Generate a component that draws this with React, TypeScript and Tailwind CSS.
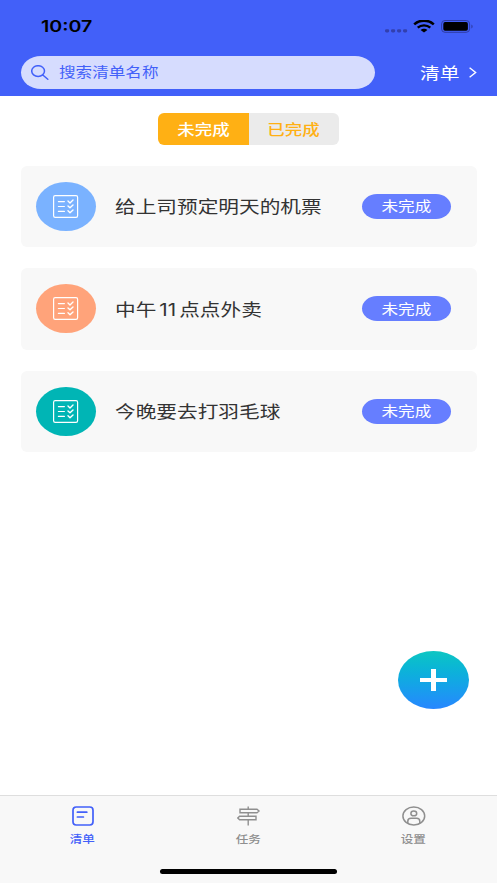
import { ReactNode, useState } from "react";
import clsx from "clsx";

type Todo = {
  id: number;
  title: string;
  color: string;
};

const todos: Todo[] = [
  { id: 1, title: "给上司预定明天的机票", color: "bg-[#7ab2ff]" },
  { id: 2, title: "中午 11 点点外卖", color: "bg-[#ffa37a]" },
  { id: 3, title: "今晚要去打羽毛球", color: "bg-[#00b5b5]" },
];

// Wide lettering, grows to the right of its start
function Wide({ children, className }: { children: ReactNode; className?: string }) {
  return (
    <span className={clsx("inline-block whitespace-pre scale-x-[1.22]", className || "origin-left")}>
      {children}
    </span>
  );
}

function StatusBar() {
  return (
    <div className="flex h-[52px] items-center justify-between pl-[41px] pr-[23px] text-black">
      <Wide className="origin-left font-['Inter'] text-[16.1px] font-semibold leading-none">10:07</Wide>
      <div className="flex items-center">
        <svg className="mt-[9px] h-[4px] w-[23px]" viewBox="0 0 23 4" fill="#323fae">
          <rect x="0" y="0.2" width="4.2" height="3.2" rx="1.4" />
          <rect x="6" y="0.2" width="4.2" height="3.2" rx="1.4" />
          <rect x="12" y="0.2" width="4.2" height="3.2" rx="1.4" />
          <rect x="18" y="0.2" width="4.2" height="3.2" rx="1.4" />
        </svg>
        <svg className="ml-[5px] h-[13px] w-[22px]" viewBox="0 0 22 13" fill="none" stroke="#000">
          <path d="M1.2 4.4C6.6-.6 15.4-.6 20.8 4.4" strokeWidth="2.5" />
          <path d="M4.7 7.7C8.2 4.6 13.8 4.6 17.3 7.7" strokeWidth="2.4" />
          <path d="M7.6 10.1C9.4 8.4 12.6 8.4 14.4 10.1L11 12.6Z" fill="#000" stroke="none" />
        </svg>
        <svg className="ml-[6px] h-[13px] w-[33px]" viewBox="0 0 33 13">
          <rect x="0.6" y="0.5" width="28" height="11.8" rx="3.4" fill="none" stroke="#2f3ca5" />
          <rect x="2.3" y="2.1" width="24.6" height="8.6" rx="1.8" fill="#000" />
          <path d="M30.4 4.4C32 4.9 32 7.9 30.4 8.4Z" fill="#2f3ca5" />
        </svg>
      </div>
    </div>
  );
}

function ChecklistIcon() {
  return (
    <svg
      className="h-[23px] w-[26px]"
      viewBox="0 0 26 23"
      fill="none"
      stroke="#fff"
      strokeWidth="1.2"
      strokeLinecap="round"
      strokeLinejoin="round"
    >
      <rect x="0.6" y="0.7" width="24" height="21.6" rx="1.6" />
      <path d="M5.4 6.6h6M5.4 11.5h6M5.4 16.4h6" />
      <path d="M15 6l2 1.9 3-2.8M15 10.9l2 1.9 3-2.8M15 15.8l2 1.9 3-2.8" strokeWidth="1.4" />
    </svg>
  );
}

function TodoCard({ todo }: { todo: Todo }) {
  return (
    <div className="flex h-[81.5px] items-center rounded-[6px] bg-[#f8f8f8] pl-[15.5px] pr-[25.5px]">
      <div className={clsx("flex h-[49px] w-[60px] shrink-0 items-center justify-center rounded-[50%]", todo.color)}>
        <ChecklistIcon />
      </div>
      <div className="ml-[19px] flex-1 pt-[3px] font-['Inter','Noto_Sans_CJK_SC',sans-serif] text-[16.95px] text-[#333] [word-spacing:-2.3px]">
        <Wide>{todo.title}</Wide>
      </div>
      <div className="flex h-[25px] w-[89px] items-center justify-center rounded-[15px/12.5px] bg-[#667eff] pb-[2px] text-[13.6px] text-white">
        <Wide className="origin-center">未完成</Wide>
      </div>
    </div>
  );
}

function ListIcon() {
  return (
    <svg className="h-[20px] w-[22px]" viewBox="0 0 22 20" fill="none" stroke="currentColor" strokeWidth="1.7" strokeLinecap="round">
      <rect x="1" y="1" width="20" height="18" rx="3.2" />
      <path d="M5.4 6.2h9.4M5.4 11h6" />
    </svg>
  );
}

function SignpostIcon() {
  return (
    <svg className="h-[20px] w-[24px]" viewBox="0 0 24 20" fill="none" stroke="currentColor" strokeWidth="1.4">
      <path d="M3 3.2h17l2 1.8-2 1.8H3zM19 10.2H2.6L.8 12l1.8 1.8H19z" />
      <path d="M11.2 0.6v2.6M11.2 6.8v3.4M11.2 13.8v5.6" />
    </svg>
  );
}

function ProfileIcon() {
  return (
    <svg className="h-[20px] w-[24px]" viewBox="0 0 24 20" fill="none" stroke="currentColor" strokeWidth="1.5">
      <ellipse cx="11.8" cy="10" rx="10.9" ry="9.1" />
      <ellipse cx="11.8" cy="7.4" rx="2.9" ry="2.4" />
      <path d="M5.8 17.4v-2.2c0-2 1.4-3 3.2-3h5.6c1.8 0 3.2 1 3.2 3v2.2" />
    </svg>
  );
}

const navItems = [
  { label: "清单", icon: <ListIcon /> },
  { label: "任务", icon: <SignpostIcon /> },
  { label: "设置", icon: <ProfileIcon /> },
];

export default function App() {
  const [done, setDone] = useState(false);
  const [active, setActive] = useState(0);

  return (
    <div className="relative flex h-[883px] w-[497px] flex-col overflow-hidden bg-white font-['Noto_Sans_CJK_SC',sans-serif]">
      <header className="h-[95.5px] shrink-0 bg-[#4260f9]">
        <StatusBar />
        <div className="mt-[4px] flex items-center pl-[21px] pr-[20px]">
          <div className="flex h-[33px] w-[353.5px] items-center rounded-[20px/16.5px] bg-[#d6dcfe] pl-[10px] text-[#4260f9]">
            <svg className="h-[15px] w-[18px]" viewBox="0 0 18 15" fill="none" stroke="currentColor" strokeWidth="1.5" strokeLinecap="round">
              <ellipse cx="7.1" cy="6.1" rx="6.4" ry="5.4" />
              <path d="M11.8 10l5 4.2" />
            </svg>
            <div className="ml-[10px] pb-[2px] text-[13.6px]">
              <Wide>搜索清单名称</Wide>
            </div>
          </div>
          <div className="ml-[45.5px] w-[42px] pb-[1px] text-[16.2px] text-white">
            <Wide>清单</Wide>
          </div>
          <svg className="ml-auto h-[11px] w-[8px]" viewBox="0 0 8 11" fill="none" stroke="#fff" strokeWidth="1.4">
            <path d="M0.6 0.8L6.6 5.5L0.6 10.2" />
          </svg>
        </div>
      </header>

      <main className="flex-1 px-[20.5px] pt-[17.5px]">
        <div className="mx-auto flex h-[31.5px] w-[181px] overflow-hidden rounded-[6px] text-[14.3px] font-medium">
          <button
            type="button"
            className={clsx("flex flex-1 items-center justify-center pb-[1px]", done ? "bg-[#ebebeb] text-[#ffb014]" : "bg-[#ffb014] text-white")}
            onClick={() => setDone(false)}
          >
            <Wide className="origin-center">未完成</Wide>
          </button>
          <button
            type="button"
            className={clsx("flex flex-1 items-center justify-center pb-[1px]", done ? "bg-[#ffb014] text-white" : "bg-[#ebebeb] text-[#ffb014]")}
            onClick={() => setDone(true)}
          >
            <Wide className="origin-center">已完成</Wide>
          </button>
        </div>

        <div className="mt-[21px] flex flex-col gap-[21px]">
          {todos.map((todo) => (
            <TodoCard key={todo.id} todo={todo} />
          ))}
        </div>
      </main>

      <button
        type="button"
        className="absolute bottom-[174px] right-[28px] flex h-[58.5px] w-[71.5px] items-center justify-center rounded-[50%] bg-linear-to-b from-[#0fc6c2] to-[#2786ff]"
      >
        <svg className="h-[22px] w-[27px]" viewBox="0 0 27 22" fill="#fff">
          <path d="M11 0h5v9h11v4H16v9h-5v-9H0V9h11z" />
        </svg>
      </button>

      <nav className="flex h-[88px] shrink-0 flex-col border-t border-[#dedede] bg-[#f8f8f8]">
        <div className="flex pt-[9.5px]">
          {navItems.map((item, index) => (
            <button
              key={item.label}
              type="button"
              className={clsx("flex flex-1 flex-col items-center", index === active ? "text-[#4260f9]" : "text-[#8f8f8f]")}
              onClick={() => setActive(index)}
            >
              {item.icon}
              <span className="mr-[1px] mt-[5px] text-[10.3px] font-medium leading-[15px]">
                <Wide className="origin-center">{item.label}</Wide>
              </span>
            </button>
          ))}
        </div>
        <div className="mx-auto mb-[9px] mt-auto h-[5px] w-[177px] rounded-full bg-black" />
      </nav>
    </div>
  );
}
